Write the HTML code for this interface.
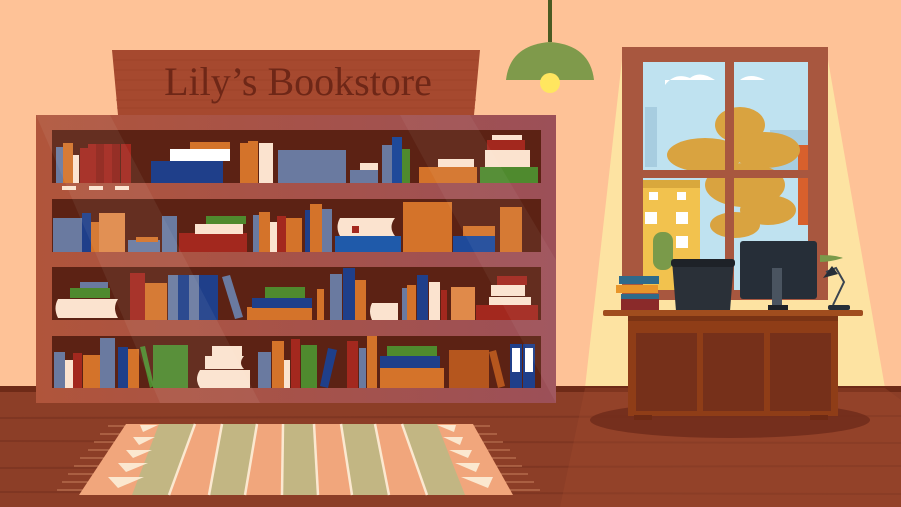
<!DOCTYPE html>
<html><head><meta charset="utf-8"><style>
html,body{margin:0;padding:0;width:901px;height:507px;overflow:hidden;background:#fec297}
svg{display:block}
</style></head><body>
<svg width="901" height="507" viewBox="0 0 901 507" xmlns="http://www.w3.org/2000/svg">
<rect width="901" height="507" fill="#fec297"/>
<polygon points="622,60 828,60 885,388 585,388" fill="#fde3a2"/>
<rect y="386" width="901" height="121" fill="#8c3e27"/>
<rect y="386" width="901" height="6" fill="#6e2a17"/>
<g stroke="#7a3320" stroke-width="2" opacity=".7">
<line x1="0" y1="418" x2="901" y2="416"/><line x1="0" y1="441" x2="901" y2="443"/><line x1="0" y1="468" x2="901" y2="466"/><line x1="0" y1="492" x2="901" y2="494"/></g>
<polygon points="585,388 885,388 901,400 901,507 560,507" fill="#a04a2e" opacity=".35"/>
<rect x="548" y="0" width="4" height="42" fill="#4a5a22"/>
<path d="M506,80 Q510,45 550,42 Q590,45 594,80 Z" fill="#7f9a4b"/>
<circle cx="550" cy="83" r="10" fill="#ffe65f"/>
<polygon points="112,50 480,50 474,115 118,115" fill="#a6492f"/>
<g stroke="#9a4028" stroke-width="1" opacity=".6">
<line x1="114" y1="60" x2="478" y2="60"/><line x1="114" y1="70" x2="478" y2="70"/><line x1="115" y1="80" x2="477" y2="80"/><line x1="116" y1="90" x2="476" y2="90"/><line x1="116" y1="100" x2="476" y2="100"/><line x1="117" y1="108" x2="475" y2="108"/></g>
<text x="298" y="95" text-anchor="middle" font-family="Liberation Serif, serif" font-size="40" fill="#6e2717">Lily’s Bookstore</text>
<defs><linearGradient id="bc" x1="0" x2="1"><stop offset="0" stop-color="#b0553b"/><stop offset="1" stop-color="#9c5058"/></linearGradient></defs>
<rect x="36" y="115" width="520" height="288" fill="url(#bc)"/>
<g fill="#5c2214">
<rect x="52" y="130" width="489" height="53"/>
<rect x="52" y="199" width="489" height="53"/>
<rect x="52" y="267" width="489" height="53"/>
<rect x="52" y="336" width="489" height="52"/>
</g>
<g>
<rect x="56" y="147" width="7" height="36" fill="#6a7aa0"/><rect x="63" y="143" width="10" height="40" fill="#d4732a"/><rect x="73" y="155" width="6" height="28" fill="#fbe3cf"/>
<rect x="80" y="148" width="8" height="35" fill="#a3281e"/><rect x="88" y="144" width="8" height="39" fill="#a3281e"/><rect x="96" y="144" width="8" height="39" fill="#8f2219"/><rect x="104" y="144" width="8" height="39" fill="#a3281e"/><rect x="112" y="144" width="8" height="39" fill="#8f2219"/><rect x="121" y="144" width="10" height="39" fill="#a3281e"/>
<rect x="151" y="161" width="72" height="22" fill="#1f3f8a"/><rect x="170" y="149" width="60" height="12" fill="#fff"/><rect x="190" y="142" width="40" height="7" fill="#d4732a"/>
<rect x="240" y="143" width="8" height="40" fill="#d4732a"/><rect x="248" y="141" width="10" height="42" fill="#d4732a"/><rect x="259" y="143" width="14" height="40" fill="#fbe3cf"/>
<rect x="278" y="150" width="68" height="33" fill="#6a7aa0"/>
<rect x="350" y="170" width="28" height="13" fill="#6a7aa0"/><rect x="360" y="163" width="18" height="7" fill="#fbe3cf"/>
<rect x="382" y="145" width="10" height="38" fill="#6a7aa0"/><rect x="392" y="137" width="10" height="46" fill="#1f4a9a"/><rect x="402" y="149" width="8" height="34" fill="#4f8a2e"/>
<rect x="419" y="167" width="58" height="16" fill="#d4732a"/><rect x="438" y="159" width="36" height="8" fill="#fbe3cf"/>
<rect x="480" y="167" width="58" height="16" fill="#4f8a2e"/><rect x="485" y="150" width="45" height="17" fill="#fbe3cf"/><rect x="487" y="140" width="38" height="10" fill="#a3281e"/><rect x="492" y="135" width="30" height="5" fill="#fbe3cf"/>
<rect x="62" y="186" width="14" height="4" fill="#fbe3cf"/><rect x="89" y="186" width="14" height="4" fill="#fbe3cf"/><rect x="115" y="186" width="14" height="4" fill="#fbe3cf"/>
</g>
<g>
<rect x="53" y="218" width="29" height="34" fill="#6a7aa0"/><rect x="82" y="213" width="9" height="39" fill="#1f3f8a"/><rect x="91" y="222" width="8" height="30" fill="#d4732a"/><rect x="99" y="213" width="26" height="39" fill="#e08a4a"/>
<rect x="128" y="240" width="32" height="12" fill="#6a7aa0"/><rect x="136" y="237" width="22" height="5" fill="#d4732a"/>
<rect x="162" y="216" width="15" height="36" fill="#6a7aa0"/>
<rect x="179" y="233" width="68" height="19" fill="#a3281e"/><rect x="195" y="224" width="48" height="10" fill="#fbe3cf"/><rect x="206" y="216" width="40" height="8" fill="#4f8a2e"/>
<rect x="253" y="215" width="6" height="37" fill="#6a7aa0"/><rect x="259" y="212" width="11" height="40" fill="#d4732a"/><rect x="270" y="222" width="7" height="30" fill="#fbe3cf"/><rect x="277" y="216" width="9" height="36" fill="#a3281e"/><rect x="286" y="218" width="16" height="34" fill="#d4732a"/>
<rect x="305" y="210" width="5" height="42" fill="#1f3f8a"/><rect x="310" y="204" width="12" height="48" fill="#d4732a"/><rect x="322" y="209" width="10" height="43" fill="#6a7aa0"/>
<rect x="335" y="236" width="66" height="16" fill="#1f5aaa"/><path d="M340,218 H395 Q388,227 395,236 H340 Q335,227 340,218 Z" fill="#fbe3cf"/><rect x="352" y="226" width="7" height="7" fill="#a3281e"/>
<rect x="403" y="202" width="49" height="50" fill="#d4732a"/><rect x="453" y="236" width="42" height="16" fill="#1f4a9a"/><rect x="463" y="226" width="32" height="10" fill="#d4732a"/>
<rect x="500" y="207" width="22" height="45" fill="#d4732a"/>
</g>
<g>
<path d="M58,299 H118 Q112,308 118,318 H58 Q53,308 58,299 Z" fill="#fbe3cf"/><rect x="70" y="288" width="40" height="10" fill="#4f8a2e"/><rect x="80" y="282" width="28" height="6" fill="#6a7aa0"/>
<rect x="130" y="273" width="15" height="47" fill="#a3281e"/><rect x="145" y="283" width="22" height="37" fill="#d4732a"/>
<rect x="168" y="275" width="10" height="45" fill="#6a7aa0"/><rect x="178" y="275" width="11" height="45" fill="#1f3f8a"/><rect x="189" y="275" width="10" height="45" fill="#6a7aa0"/><rect x="199" y="275" width="9" height="45" fill="#1f3f8a"/><rect x="208" y="275" width="10" height="45" fill="#1f3f8a"/><polygon points="222,277 230,275 243,317 235,319" fill="#6a7aa0"/>
<rect x="247" y="307" width="65" height="13" fill="#d4732a"/><rect x="252" y="298" width="60" height="10" fill="#1f3f8a"/><rect x="265" y="287" width="40" height="11" fill="#4f8a2e"/>
<rect x="317" y="289" width="7" height="31" fill="#d4732a"/><rect x="330" y="274" width="12" height="46" fill="#6a7aa0"/><rect x="343" y="268" width="12" height="52" fill="#1f3f8a"/><rect x="355" y="280" width="11" height="40" fill="#d4732a"/>
<path d="M372,303 H398 V320 H372 Q368,311 372,303 Z" fill="#fbe3cf"/>
<rect x="402" y="288" width="5" height="32" fill="#6a7aa0"/><rect x="407" y="285" width="9" height="35" fill="#d4732a"/><rect x="417" y="275" width="11" height="45" fill="#1f3f8a"/><rect x="429" y="282" width="11" height="38" fill="#fbe3cf"/><rect x="441" y="290" width="6" height="30" fill="#a3281e"/><rect x="451" y="287" width="24" height="33" fill="#e08a4a"/>
<rect x="476" y="305" width="62" height="15" fill="#a3281e"/><rect x="489" y="297" width="42" height="8" fill="#fbe3cf"/><rect x="491" y="285" width="34" height="11" fill="#fbe3cf"/><rect x="497" y="276" width="30" height="9" fill="#a3281e"/>
</g>
<g>
<rect x="54" y="352" width="11" height="36" fill="#6a7aa0"/><rect x="65" y="360" width="8" height="28" fill="#fbe3cf"/><rect x="73" y="353" width="9" height="35" fill="#a3281e"/><rect x="83" y="355" width="17" height="33" fill="#d4732a"/>
<rect x="100" y="338" width="15" height="50" fill="#6a7aa0"/><rect x="118" y="347" width="10" height="41" fill="#1f3f8a"/><rect x="128" y="349" width="11" height="39" fill="#d4732a"/><polygon points="140,347 145,346 154,386 150,388" fill="#4f8a2e"/><rect x="153" y="345" width="35" height="43" fill="#4f8a2e"/>
<path d="M200,370 H250 V388 H200 Q194,379 200,370 Z" fill="#fbe3cf"/><path d="M205,356 H244 Q238,363 244,369 H205 Z" fill="#fbe3cf"/><rect x="212" y="346" width="30" height="10" fill="#fbe3cf"/>
<rect x="258" y="352" width="13" height="36" fill="#6a7aa0"/><rect x="272" y="341" width="12" height="47" fill="#d4732a"/><rect x="284" y="360" width="6" height="28" fill="#fbe3cf"/><rect x="291" y="339" width="9" height="49" fill="#a3281e"/><rect x="301" y="345" width="16" height="43" fill="#4f8a2e"/>
<polygon points="328,348 337,350 328,388 320,386" fill="#1f3f8a"/><rect x="347" y="341" width="11" height="47" fill="#a3281e"/><rect x="359" y="348" width="7" height="40" fill="#6a7aa0"/><rect x="367" y="336" width="10" height="52" fill="#d4732a"/>
<rect x="380" y="368" width="64" height="20" fill="#d4732a"/><rect x="380" y="356" width="60" height="12" fill="#1f3f8a"/><rect x="387" y="346" width="50" height="10" fill="#4f8a2e"/>
<rect x="449" y="350" width="40" height="38" fill="#b5561e"/><polygon points="489,352 496,350 505,386 498,388" fill="#b5561e"/>
<rect x="510" y="344" width="12" height="44" fill="#1f3f8a"/><rect x="523" y="344" width="12" height="44" fill="#1f3f8a"/><rect x="512" y="348" width="8" height="24" fill="#fff"/><rect x="525" y="348" width="8" height="24" fill="#fff"/>
</g>
<polygon points="36,115 110,115 260,403 160,403" fill="#fff" opacity=".06"/>
<polygon points="400,115 470,115 556,260 556,403 " fill="#fff" opacity=".05"/>
<!-- rug -->
<g stroke="#c9805c" stroke-width="1">
<line x1="126" y1="426" x2="108" y2="426"/><line x1="122" y1="434" x2="100" y2="434"/><line x1="118" y1="442" x2="94" y2="442"/><line x1="113" y1="450" x2="88" y2="450"/><line x1="108" y1="458" x2="80" y2="458"/><line x1="103" y1="466" x2="74" y2="466"/><line x1="98" y1="474" x2="68" y2="474"/><line x1="93" y1="482" x2="62" y2="482"/><line x1="88" y1="490" x2="57" y2="490"/>
<line x1="473" y1="426" x2="490" y2="426"/><line x1="478" y1="434" x2="497" y2="434"/><line x1="482" y1="442" x2="503" y2="442"/><line x1="487" y1="450" x2="510" y2="450"/><line x1="491" y1="458" x2="516" y2="458"/><line x1="496" y1="466" x2="522" y2="466"/><line x1="500" y1="474" x2="528" y2="474"/><line x1="505" y1="482" x2="534" y2="482"/><line x1="509" y1="490" x2="540" y2="490"/>
</g>
<polygon points="126,424 473,424 513,495 79,495" fill="#f1a67c"/>
<g fill="#c2b683">
<polygon points="159,424 195,424 169,495 132,495"/><polygon points="222,424 257,424 245,495 209,495"/><polygon points="283,424 314,424 318,495 282,495"/><polygon points="341,424 375,424 389,495 352,495"/><polygon points="402,424 437,424 465,495 427,495"/>
</g>
<g stroke="#fbe8d0" stroke-width="2.5">
<line x1="195" y1="424" x2="169" y2="495"/><line x1="222" y1="424" x2="209" y2="495"/><line x1="257" y1="424" x2="245" y2="495"/><line x1="283" y1="424" x2="282" y2="495"/><line x1="314" y1="424" x2="318" y2="495"/><line x1="341" y1="424" x2="352" y2="495"/><line x1="375" y1="424" x2="389" y2="495"/><line x1="402" y1="424" x2="427" y2="495"/>
</g>
<g fill="#fbe8d0">
<polygon points="140,425 158,425 143,432"/><polygon points="133,437 155,437 139,445"/><polygon points="126,450 152,450 133,458"/><polygon points="118,463 148,463 126,472"/><polygon points="108,477 144,477 118,488"/>
<polygon points="437,425 456,425 454,432"/><polygon points="443,437 463,437 460,445"/><polygon points="449,450 472,450 468,458"/><polygon points="455,463 480,463 476,472"/><polygon points="461,477 493,477 488,488"/>
</g>
<!-- window -->
<rect x="622" y="47" width="206" height="253" fill="#a8573f"/>
<rect x="643" y="62" width="165" height="228" fill="#bfe2f0"/>
<rect x="645" y="107" width="12" height="60" fill="#a7cde0"/><rect x="770" y="130" width="38" height="40" fill="#a7cde0"/>
<path d="M665,85 Q675,72 690,78 Q700,70 715,80 H665 Z M740,80 Q750,72 765,80 Z" fill="#fff"/>
<rect x="643" y="185" width="57" height="105" fill="#f2c24e"/><rect x="643" y="180" width="57" height="8" fill="#d9a83c"/>
<g fill="#fff"><rect x="649" y="192" width="9" height="8"/><rect x="677" y="192" width="9" height="8"/><rect x="645" y="212" width="12" height="12"/><rect x="676" y="212" width="12" height="12"/><rect x="676" y="236" width="12" height="12"/></g>
<rect x="798" y="145" width="10" height="80" fill="#d8602c"/>
<g fill="#d9a340">
<ellipse cx="740" cy="125" rx="25" ry="18"/><ellipse cx="705" cy="155" rx="38" ry="17"/><ellipse cx="765" cy="150" rx="35" ry="18"/><ellipse cx="745" cy="185" rx="40" ry="22"/><ellipse cx="768" cy="210" rx="28" ry="15"/><ellipse cx="735" cy="225" rx="25" ry="13"/>
</g>
<rect x="653" y="232" width="20" height="38" rx="9" fill="#7a9a4a"/>
<rect x="725" y="62" width="9" height="228" fill="#a8573f"/>
<rect x="643" y="170" width="165" height="8" fill="#a8573f"/>
<ellipse cx="730" cy="420" rx="140" ry="18" fill="#6e2a1a" opacity=".8"/>
<rect x="619" y="276" width="40" height="8" fill="#2f6a8a"/><rect x="616" y="285" width="42" height="8" fill="#e8952a"/><rect x="621" y="294" width="38" height="5" fill="#2f6a8a"/><rect x="621" y="299" width="38" height="11" fill="#8a2a2a"/>
<path d="M672,260 H734 L730,311 H676 Z" fill="#2a3038"/><rect x="671" y="259" width="64" height="8" rx="3" fill="#1e2228"/>
<path d="M820,255 Q835,255 843,258 Q830,262 820,262 Z" fill="#7a9a4a"/>
<rect x="740" y="241" width="77" height="58" rx="3" fill="#262e38"/><rect x="772" y="268" width="10" height="38" fill="#4a5460"/><rect x="768" y="305" width="20" height="5" fill="#1e2228"/>
<path d="M826,272 L836,268 L844,282 L833,305" stroke="#3a4450" stroke-width="2" fill="none"/><path d="M823,278 L832,266 L838,274 Z" fill="#262e38"/><rect x="828" y="305" width="22" height="5" rx="2" fill="#262e38"/>
<rect x="603" y="310" width="260" height="6" rx="2" fill="#a04d1e"/>
<rect x="628" y="316" width="210" height="100" fill="#8f3d17"/>
<rect x="628" y="316" width="210" height="5" fill="#7a3314"/>
<g fill="#76301a"><rect x="636" y="333" width="61" height="78"/><rect x="703" y="333" width="61" height="78"/><rect x="770" y="333" width="61" height="78"/></g>
<rect x="634" y="415" width="18" height="5" fill="#6e2a14"/><rect x="810" y="415" width="18" height="5" fill="#6e2a14"/>
</svg>
</body></html>
